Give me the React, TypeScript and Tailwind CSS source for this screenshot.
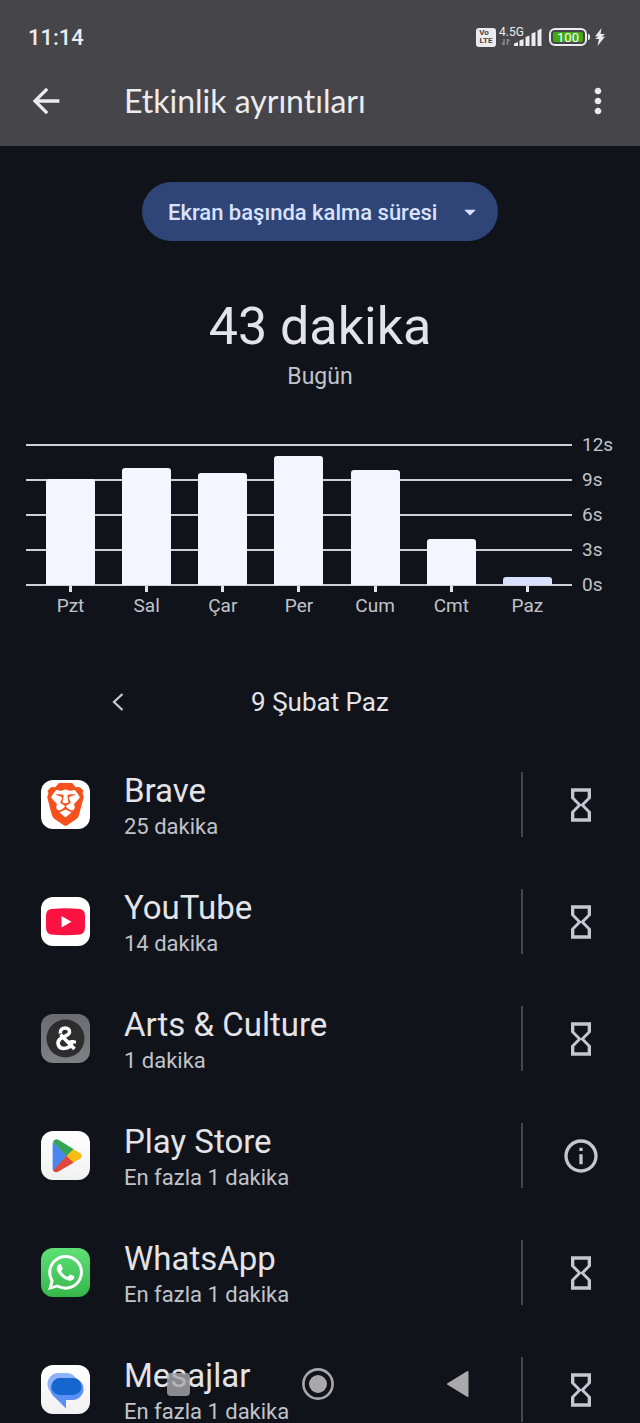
import React from 'react';
import {
  MdArrowBack,
  MdArrowDropDown,
  MdHourglassEmpty,
  MdInfoOutline,
  MdMoreVert,
} from 'react-icons/md';
import { SiBrave, SiWhatsapp } from 'react-icons/si';

const days = [
  { label: 'Pzt', hours: 9.05 },
  { label: 'Sal', hours: 10 },
  { label: 'Çar', hours: 9.5 },
  { label: 'Per', hours: 11 },
  { label: 'Cum', hours: 9.75 },
  { label: 'Cmt', hours: 3.9 },
  { label: 'Paz', hours: 0.7, current: true },
];

const MAX_HOURS = 12;
const ticks = ['12s', '9s', '6s', '3s', '0s'];

const YouTubeLogo = () => (
  <svg viewBox="0 0 49 49" className="h-full w-full">
    <path
      d="M5 19Q5 12.500 10 12Q24.500 10.500 39 12Q44 12.500 44 19V30Q44 37 39 37.500Q24.500 39 10 37.500Q5 37 5 30Z"
      fill="#fa1340"
    />
    <path d="M20.500 19L30.500 24.800L20.500 30.600Z" fill="#fff" />
  </svg>
);

const ArtsLogo = () => (
  <svg viewBox="0 0 49 49" className="h-full w-full">
    <circle cx="24.500" cy="24.500" r="19" fill="#2d2d2f" />
    <g fill="none" stroke="#fff" strokeWidth="3.600">
      <path d="M19.300 19.500C19 15.500 21.500 14 24 14C27 14 29 16 28.500 18.500C28 21.500 21.500 22.500 18.500 25.500C15.500 29 17.500 34.500 22.500 34.500C28 34.500 31 32 31.300 26" />
      <path d="M19.500 20.500L33.500 35" />
      <path d="M27 28H35" strokeWidth="3" />
    </g>
  </svg>
);

const PlayLogo = () => (
  <svg viewBox="0 0 49 49" className="h-full w-full">
    <path d="M12 11Q11.600 12 11.600 13V37Q11.600 39 12.300 40.200L26.500 24.800Z" fill="#4a86f0" />
    <path d="M12 11Q13.300 7 17.500 8.700L32.800 18.300L26 25.300Z" fill="#34a457" />
    <path d="M12.200 39.500Q14 42.500 17.500 40.500L32.800 31.500L26 24.500Z" fill="#e2453a" />
    <path d="M32.500 18.200L39.300 22.300Q42.500 24.800 39.300 27.500L32.500 31.600L25.700 24.900Z" fill="#f9bc15" />
  </svg>
);

const MessagesLogo = () => (
  <svg viewBox="0 0 49 49" className="h-full w-full">
    <rect x="6.500" y="8" width="30" height="22" rx="11" fill="#8fb2f9" />
    <path d="M20.500 13H31.500A11 11 0 0 1 31.500 35H25V43.500L14.500 33Q9.500 29.500 9.500 24A11 11 0 0 1 20.500 13Z" fill="#5c90f7" />
    <rect x="10.500" y="13" width="30" height="17" rx="8.500" fill="#1765cf" />
  </svg>
);

const apps = [
  {
    name: 'Brave',
    time: '25 dakika',
    tile: 'bg-white',
    logo: <SiBrave className="h-[43px] w-[43px] text-[#f5511e]" />,
  },
  { name: 'YouTube', time: '14 dakika', tile: 'bg-white', logo: <YouTubeLogo /> },
  {
    name: 'Arts & Culture',
    time: '1 dakika',
    tile: 'bg-linear-to-b from-[#6b6c70] to-[#7f8084]',
    logo: <ArtsLogo />,
  },
  {
    name: 'Play Store',
    time: 'En fazla 1 dakika',
    tile: 'bg-linear-to-b from-white to-[#f1f1f1]',
    logo: <PlayLogo />,
    infoOnly: true,
  },
  {
    name: 'WhatsApp',
    time: 'En fazla 1 dakika',
    tile: 'bg-linear-to-b from-[#5fe077] to-[#35b74b]',
    logo: <SiWhatsapp className="h-[35px] w-[35px] text-white" />,
  },
  {
    name: 'Mesajlar',
    time: 'En fazla 1 dakika',
    tile: 'bg-linear-to-b from-white to-[#f1f1f1]',
    logo: <MessagesLogo />,
  },
];

const StatusBar = () => (
  <div className="flex h-14 items-center justify-between pt-[18px] pr-[34px] pl-7">
    <span className="text-[22px] font-medium">11:14</span>
    <div className="flex items-center">
      <div className="flex h-[19px] w-5 flex-col justify-center rounded-[3px] bg-[#ececee] text-center text-[8px] leading-[8px] font-bold text-[#464549]">
        <span className="pr-1">Vo</span>
        <span>LTE</span>
      </div>
      <div className="relative ml-[3px] h-5 w-[43px]">
        <svg viewBox="0 0 43 20" className="h-full w-full">
          <path
            d="M15 19V16.500L19 15V19ZM20.500 19V13.500L24.500 12V19ZM26.500 19V10L30.500 8.500V19ZM32.500 19V6.500L36.500 5V19ZM38.500 19V3.500L42.500 1.500V19Z"
            fill="#ececee"
          />
          <path d="M5 12V18M5 18L3 16M8.500 18V12M8.500 12L10.500 14" stroke="#8b8a8e" strokeWidth="1.500" fill="none" />
        </svg>
        <span className="absolute top-0 left-0 text-[12px] leading-[10px]">4.5G</span>
      </div>
      <div className="ml-[7px] flex h-[18px] w-[38px] rounded-[6px] border-2 border-[#ececee] p-[2px]">
        <span className="flex flex-1 items-center justify-center rounded-[2px] bg-[#43a817] text-[13px] leading-none text-white">
          100
        </span>
      </div>
      <div className="ml-px h-[6px] w-[2px] rounded-r bg-[#ececee]" />
      <svg viewBox="0 0 12 18" className="ml-1 h-[18px] w-3">
        <path d="M7.500 0L1 8.500H4.500L1 11H5L3.500 18L11 8.500H7.500L11 6H6.500Z" fill="#ececee" />
      </svg>
    </div>
  </div>
);

const UsageChart = () => (
  <section className="mt-[53px] flex px-[26px]">
    <div className="flex-1">
      <div className="grid h-[142px]">
        <div className="col-start-1 row-start-1 flex flex-col justify-between">
          {ticks.map((tick) => (
            <div key={tick} className="h-[2px] bg-[#cfd0d5]" />
          ))}
        </div>
        <div className="col-start-1 row-start-1 flex items-end justify-between px-5 pb-px">
          {days.map((day) => (
            <div
              key={day.label}
              className={`w-[49px] rounded-t-[3px] ${day.current ? 'bg-[#dae0fd]' : 'bg-[#f3f6fe]'}`}
              style={{ height: `${(day.hours / MAX_HOURS) * 100}%` }}
            />
          ))}
        </div>
      </div>
      <div className="flex justify-between px-5">
        {days.map((day) => (
          <div key={day.label} className="flex w-[49px] flex-col items-center">
            <div className="h-[6px] w-[3px] bg-[#e3e3e8]" />
            <span className="mt-1 text-[19px] leading-5 text-[#c1c3ca]">{day.label}</span>
          </div>
        ))}
      </div>
    </div>
    <div className="-mt-[9px] ml-[10px] flex h-40 w-8 flex-col justify-between text-[19px] leading-5 text-[#c1c3ca]">
      {ticks.map((tick) => (
        <span key={tick}>{tick}</span>
      ))}
    </div>
  </section>
);

const AppRow: React.FC<{
  name: string;
  time: string;
  tile: string;
  logo: React.ReactNode;
  infoOnly?: boolean;
}> = ({ name, time, tile, logo, infoOnly }) => (
  <li className="flex h-[117px] items-center">
    <div className={`ml-[41px] flex h-[49px] w-[49px] shrink-0 items-center justify-center overflow-hidden rounded-xl ${tile}`}>
      {logo}
    </div>
    <div className="ml-[34px] flex-1 pt-1">
      <h2 className="text-[33px] leading-10 text-[#e3e3e8]">{name}</h2>
      <p className="text-[22px] leading-8 text-[#c1c3ca]">{time}</p>
    </div>
    <div className="flex h-[65px] w-[119px] items-center justify-center border-l-2 border-[#45474d] pr-[2px]">
      <button aria-label={infoOnly ? `${name} bilgisi` : `${name} zamanlayıcısı`} className="text-[#c5c6cf]">
        {infoOnly ? <MdInfoOutline className="h-10 w-10" /> : <MdHourglassEmpty className="h-10 w-10" />}
      </button>
    </div>
  </li>
);

const NavBar = () => (
  <nav className="fixed inset-x-0 bottom-0 flex h-[78px] justify-center pr-1 text-[#a9a9ab]">
    <button aria-label="Son uygulamalar" className="flex w-[140px] items-center justify-center">
      <span className="h-[23px] w-[23px] rounded-[4px] bg-[#a9a9ab]/80" />
    </button>
    <button aria-label="Ana ekran" className="flex w-[140px] items-center justify-center">
      <svg viewBox="0 0 32 32" className="h-8 w-8">
        <circle cx="16" cy="16" r="14.600" fill="none" stroke="currentColor" strokeWidth="2.600" />
        <circle cx="16" cy="16" r="9" fill="currentColor" />
      </svg>
    </button>
    <button aria-label="Geri" className="flex w-[140px] items-center justify-center">
      <svg viewBox="0 0 24 28" className="h-7 w-6">
        <path d="M2 14L21.500 2V26Z" fill="currentColor" stroke="currentColor" strokeWidth="2" strokeLinejoin="round" />
      </svg>
    </button>
  </nav>
);

const App: React.FC = () => (
  <div className="flex h-screen flex-col overflow-hidden bg-[#10131a] font-[Roboto,sans-serif] text-[#e3e3e8]">
    <header className="shrink-0 bg-[#464549] text-[#ececee]">
      <StatusBar />
      <div className="flex h-[90px] items-center pr-[22px] pl-[26px]">
        <button aria-label="Geri dön">
          <MdArrowBack className="h-10 w-10" />
        </button>
        <h1 className="ml-[58px] flex-1 font-[Lato,sans-serif] text-[32px] [font-variant-ligatures:none]">
          Etkinlik ayrıntıları
        </h1>
        <button aria-label="Diğer seçenekler">
          <MdMoreVert className="h-10 w-10" />
        </button>
      </div>
    </header>

    <main className="min-h-0 flex-1 overflow-y-auto [scrollbar-width:none]">
      <div className="flex justify-center pt-9">
        <div className="relative">
          <select
            aria-label="Gösterilen veri"
            className="h-[59px] appearance-none rounded-full bg-[#2f4578] pt-[2px] pr-[60px] pl-[26px] text-[22px] font-medium text-[#d9e2ff]"
          >
            <option>Ekran başında kalma süresi</option>
          </select>
          <MdArrowDropDown className="pointer-events-none absolute top-4 right-[14px] h-7 w-7 text-[#d9e2ff]" />
        </div>
      </div>

      <div className="mt-14 text-center">
        <p className="text-[52px] leading-[60px]">43 dakika</p>
        <p className="mt-[6px] text-[23px] leading-7 text-[#c1c3ca]">Bugün</p>
      </div>

      <UsageChart />

      <div className="mt-[66px] grid grid-cols-[1fr_auto_1fr] items-center">
        <button aria-label="Önceki gün" className="ml-[106px] flex h-6 w-6 items-center justify-center text-[#c5c6cf]">
          <svg viewBox="0 0 12 18" className="h-[18px] w-3">
            <path d="M10.500 1L2 9L10.500 17" fill="none" stroke="currentColor" strokeWidth="2.300" />
          </svg>
        </button>
        <span className="text-[26px] leading-10">9 Şubat Paz</span>
      </div>

      <ul className="mt-6">
        {apps.map((app) => (
          <AppRow key={app.name} {...app} />
        ))}
      </ul>
    </main>

    <NavBar />
  </div>
);

export default App;
